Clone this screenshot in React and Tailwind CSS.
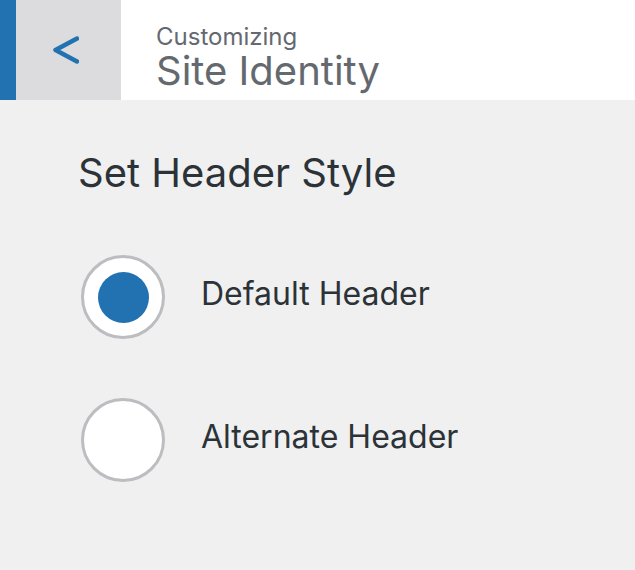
export default function App() {
  return (
    <div className="w-[635px] h-[570px] bg-[#f0f0f1] overflow-hidden" style={{ fontFamily: "Inter, 'Noto Sans', sans-serif" }}>
      <div className="flex h-[100px] bg-white">
        <div className="w-[16px] bg-[#2271b1]" />
        <div className="w-[105px] bg-[#dcdcde] flex items-center pl-[37px]">
          <svg width="26" height="28" viewBox="0 0 26 28" className="-mt-[1px]">
            <path d="M24 2.5 L2.5 14 L24 25.5" fill="none" stroke="#2271b1" strokeWidth="4.5" strokeLinecap="round" strokeLinejoin="round" />
          </svg>
        </div>
        <div className="flex flex-col pl-[35px] pt-[24px]">
          <span className="text-[24px] leading-[26px] text-[#646970]">Customizing</span>
          <span className="text-[40px] leading-[40px] text-[#646970] mt-[1px]">Site Identity</span>
        </div>
      </div>
      <div className="pl-[78px] pt-[49px]">
        <h2 className="text-[40px] leading-[48px] text-[#2c3338] font-normal">Set Header Style</h2>
        <div className="mt-[58px] flex flex-col gap-[59px] ml-[3px]">
          <label className="flex items-center gap-[36px]">
            <span className="w-[84px] h-[84px] rounded-full border-[3px] border-[#bcbdc0] bg-white flex items-center justify-center">
              <span className="w-[51px] h-[51px] rounded-full bg-[#2271b1]" />
            </span>
            <span className="text-[32px] leading-[40px] text-[#2c3338] -mt-[6px]">Default Header</span>
          </label>
          <label className="flex items-center gap-[36px]">
            <span className="w-[84px] h-[84px] rounded-full border-[3px] border-[#bcbdc0] bg-white" />
            <span className="text-[32px] leading-[40px] text-[#2c3338] -mt-[6px]">Alternate Header</span>
          </label>
        </div>
      </div>
    </div>
  );
}
